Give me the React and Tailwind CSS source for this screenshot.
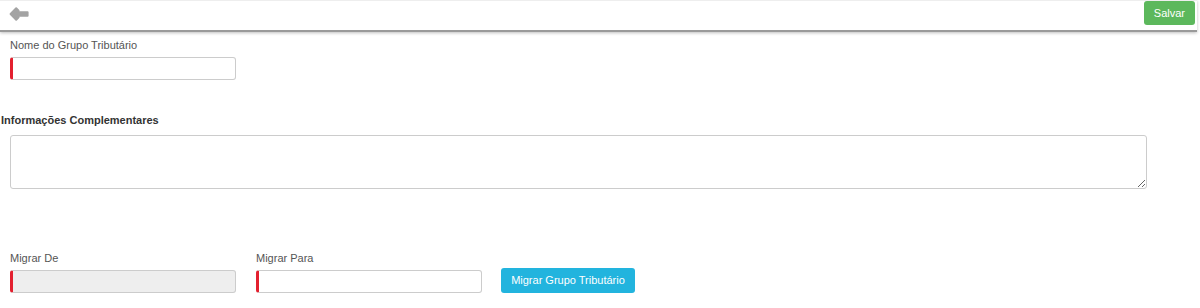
const Field = ({ label, disabled, className = "" }) => (
  <div className={className}>
    <label className="block text-[11px] leading-[14px] text-[#555] mb-[5px]">{label}</label>
    <input
      disabled={disabled}
      className={`block w-[226px] h-[23px] border border-[#ccc] border-l-[3px] border-l-[#e3202f] rounded-[3px] ${
        disabled ? "bg-[#eee]" : "bg-white"
      }`}
    />
  </div>
);

export default function App() {
  return (
    <div className="w-[1200px] h-[308px] bg-white font-['Liberation_Sans',Arial,sans-serif] overflow-hidden">
      {/* Header */}
      <div className="w-[1197px] h-[32px] flex items-center justify-between border-t border-[#eee] border-b-2 border-b-[#9a9a9a] shadow-[0_1px_3px_rgba(0,0,0,0.25)]">
        <svg className="ml-[9px] mt-[-4px]" width="20" height="16" viewBox="0 0 20 16">
          <path
            d="M1.6 8 L7.2 2.2 L9.6 4.6 L8.2 6.2 H18.6 V9.8 H8.2 L9.6 11.4 L7.2 13.8 Z"
            fill="#a3a3a3"
            stroke="#a3a3a3"
            strokeWidth="2"
            strokeLinejoin="round"
          />
        </svg>
        <button className="mr-[2px] mb-[5px] h-[24px] px-[10px] bg-[#5cb85c] text-white text-[11px] rounded-[3px]">
          Salvar
        </button>
      </div>

      {/* Form */}
      <div className="pl-[10px] pt-[6px]">
        <Field label="Nome do Grupo Tributário" />

        <div className="mt-[33px] -ml-[9px] text-[11px] leading-[14px] font-bold text-[#333]">
          Informações Complementares
        </div>
        <textarea className="block mt-[8px] w-[1137px] h-[54px] border border-[#ccc] rounded-[3px] resize-y" />

        <div className="mt-[62px] flex items-end">
          <Field label="Migrar De" disabled />
          <Field label="Migrar Para" className="ml-[20px]" />
          <button className="ml-[19px] h-[25px] w-[134px] bg-[#22b4de] text-white text-[11px] rounded-[3px]">
            Migrar Grupo Tributário
          </button>
        </div>
      </div>
    </div>
  );
}
